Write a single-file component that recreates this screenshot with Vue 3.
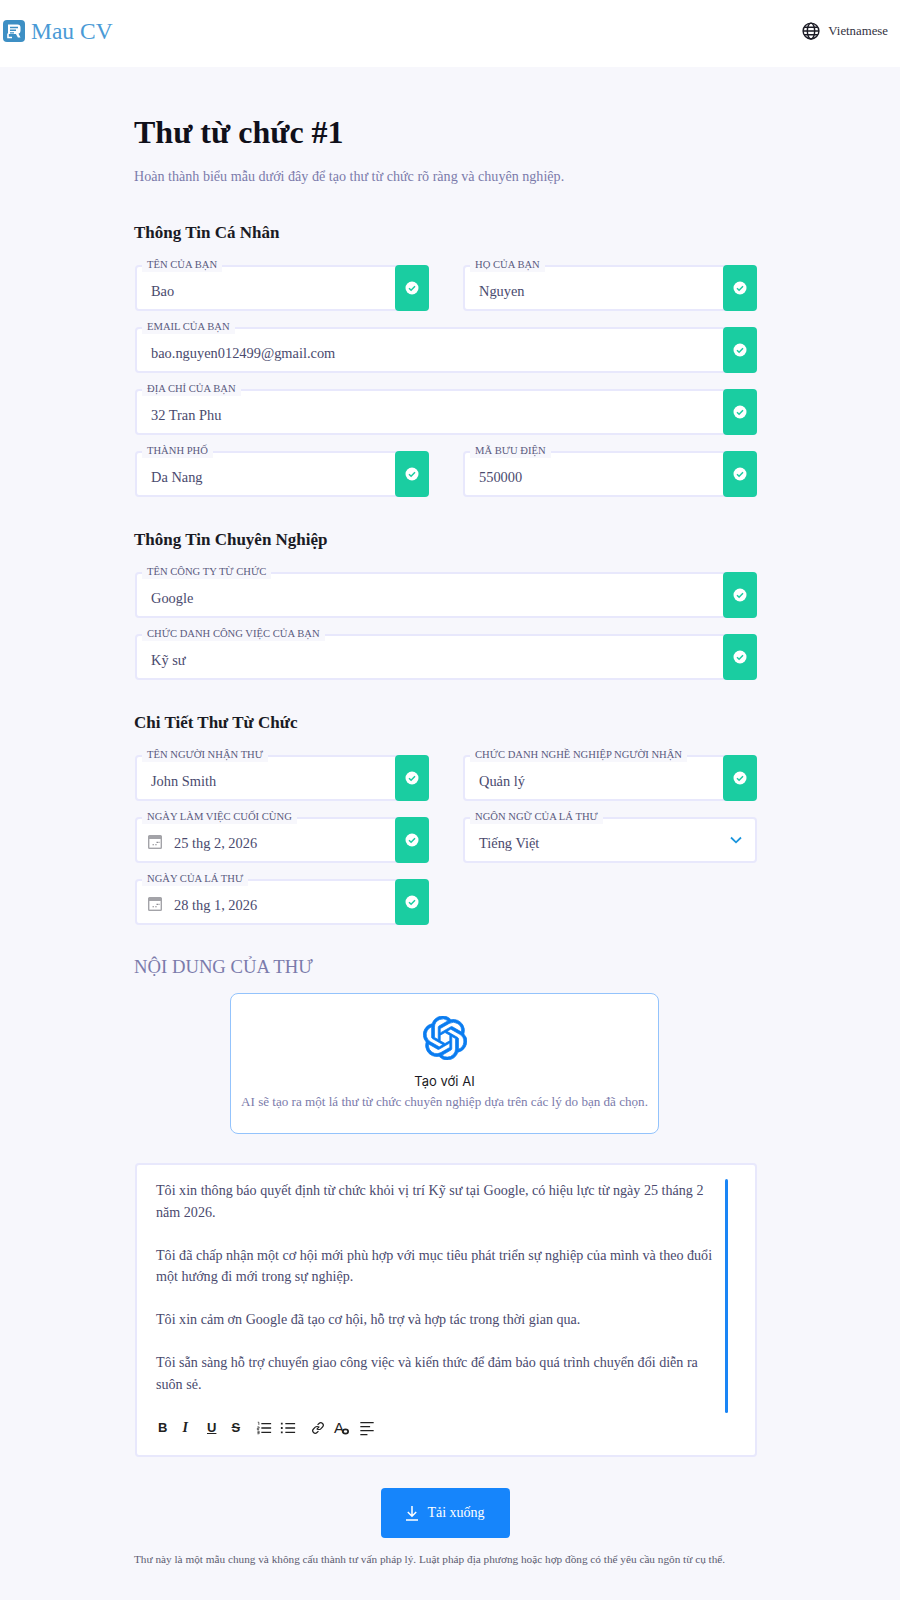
<template>
  <div class="app">
    <header class="topbar">
      <div class="brand">
        <svg class="brand__icon" viewBox="0 0 24 24">
          <rect x="1" y="1" width="22" height="22" rx="4" fill="#3d8fc4" />
          <path d="M6 5.500h9.500a3 3 0 0 1 3 3v3.500a3 3 0 0 1-2 2.800l2 3.700h-2.600l-2-3.500H6z" fill="#fff" />
          <path d="M8 8.500h8M8 11.200h6M8 13.900h4" stroke="#3d8fc4" stroke-width="1.400" />
          <path d="M6 14.500v4h4" stroke="#fff" stroke-width="1.600" fill="none" />
        </svg>
        <span>Mau CV</span>
      </div>
      <div class="lang">
        <svg class="lang__icon" viewBox="0 0 24 24" fill="none" stroke="#1b1b25" stroke-width="1.700">
          <circle cx="12" cy="12" r="9.500" />
          <ellipse cx="12" cy="12" rx="4.400" ry="9.500" />
          <path d="M2.500 12h19M3.600 7.500h16.800M3.600 16.500h16.800" />
        </svg>
        <span>Vietnamese</span>
      </div>
    </header>

    <main class="page">
      <h1 class="title">Thư từ chức #1</h1>
      <p class="intro">Hoàn thành biểu mẫu dưới đây để tạo thư từ chức rõ ràng và chuyên nghiệp.</p>

      <section v-for="section in sections" :key="section.title" class="section">
        <h2 class="section__title">{{ section.title }}</h2>
        <div class="grid">
          <div
            v-for="field in section.fields"
            :key="field.label"
            class="field"
            :class="{ 'field--wide': field.wide, 'field--date': field.date }"
          >
            <span class="field__label">{{ field.label }}</span>
            <svg v-if="field.date" class="field__cal" viewBox="0 0 16 16">
              <path d="M1 2.500A1.500 1.500 0 0 1 2.500 1h11A1.500 1.500 0 0 1 15 2.500v11a1.500 1.500 0 0 1-1.500 1.500h-11A1.500 1.500 0 0 1 1 13.500z" fill="#a3a3a8" />
              <rect x="2.400" y="5" width="11.200" height="8.600" fill="#fff" />
              <path d="M5.500 10.800h1.500M8.200 10.800h1.500M9.500 8.400h1.500M11.500 8.400h1" stroke="#8d8d93" stroke-width="1.100" />
            </svg>
            <span class="field__value">{{ field.value }}</span>
            <span v-if="field.select" class="field__chevron">
              <svg viewBox="0 0 12 8" fill="none" stroke="#1b95dd" stroke-width="1.800">
                <path d="M1 1.500l5 4.800 5-4.800" />
              </svg>
            </span>
            <span v-else class="field__ok">
              <svg viewBox="0 0 14 14">
                <circle cx="7" cy="7" r="6.500" fill="#fff" />
                <path d="M4 7.200l2.100 2 3.900-4" fill="none" stroke="#1acda1" stroke-width="1.500" />
              </svg>
            </span>
          </div>
        </div>
      </section>

      <h2 class="content-title">NỘI DUNG CỦA THƯ</h2>

      <div class="ai-card">
        <svg class="ai-card__icon" viewBox="0 0 24 24" fill="#0a7cf0" stroke="#0a7cf0" stroke-width=".4">
          <path d="M22.2819 9.8211a5.9847 5.9847 0 0 0-.5157-4.9108 6.0462 6.0462 0 0 0-6.5098-2.9A6.0651 6.0651 0 0 0 4.9807 4.1818a5.9847 5.9847 0 0 0-3.9977 2.9 6.0462 6.0462 0 0 0 .7427 7.0966 5.98 5.98 0 0 0 .511 4.9107 6.051 6.051 0 0 0 6.5146 2.9001A5.9847 5.9847 0 0 0 13.2599 24a6.0557 6.0557 0 0 0 5.7718-4.2058 5.9894 5.9894 0 0 0 3.9977-2.9001 6.0557 6.0557 0 0 0-.7475-7.0729zm-9.022 12.6081a4.4755 4.4755 0 0 1-2.8764-1.0408l.1419-.0804 4.7783-2.7582a.7948.7948 0 0 0 .3927-.6813v-6.7369l2.02 1.1686a.071.071 0 0 1 .038.052v5.5826a4.504 4.504 0 0 1-4.4945 4.4944zm-9.6607-4.1254a4.4708 4.4708 0 0 1-.5346-3.0137l.142.0852 4.783 2.7582a.7712.7712 0 0 0 .7806 0l5.8428-3.3685v2.3324a.0804.0804 0 0 1-.0332.0615L9.74 19.9502a4.4992 4.4992 0 0 1-6.1408-1.6464zM2.3408 7.8956a4.485 4.485 0 0 1 2.3655-1.9728V11.6a.7664.7664 0 0 0 .3879.6765l5.8144 3.3543-2.0201 1.1685a.0757.0757 0 0 1-.071 0l-4.8303-2.7865A4.504 4.504 0 0 1 2.3408 7.872zm16.5963 3.8558L13.1038 8.364 15.1192 7.2a.0757.0757 0 0 1 .071 0l4.8303 2.7913a4.4944 4.4944 0 0 1-.6765 8.1042v-5.6772a.79.79 0 0 0-.407-.667zm2.0107-3.0231l-.142-.0852-4.7735-2.7818a.7759.7759 0 0 0-.7854 0L9.409 9.2297V6.8974a.0662.0662 0 0 1 .0284-.0615l4.8303-2.7866a4.4992 4.4992 0 0 1 6.6802 4.66zM8.3065 12.863l-2.02-1.1638a.0804.0804 0 0 1-.038-.0567V6.0742a4.4992 4.4992 0 0 1 7.3757-3.4537l-.142.0805L8.704 5.459a.7948.7948 0 0 0-.3927.6813zm1.0976-2.3654l2.602-1.4998 2.6069 1.4998v2.9994l-2.5974 1.4997-2.6067-1.4997Z" />
        </svg>
        <div class="ai-card__title">Tạo với AI</div>
        <div class="ai-card__text">AI sẽ tạo ra một lá thư từ chức chuyên nghiệp dựa trên các lý do bạn đã chọn.</div>
      </div>

      <div class="editor">
        <div class="editor__body">
          <p v-for="para in letter" :key="para">{{ para }}</p>
        </div>
        <span class="editor__scroll"></span>
        <div class="toolbar">
          <span class="tool tool--b">B</span>
          <span class="tool tool--i">I</span>
          <span class="tool tool--u">U</span>
          <span class="tool tool--s">S</span>
          <svg class="tool-svg tool-svg--first" viewBox="0 0 18 18" fill="none" stroke="#222" stroke-width="1.300">
            <path d="M6 4h11M6 9h11M6 14h11" stroke-width="1.500" />
            <path d="M2 2.500h1.200v3M1.500 7.800h2v1.500h-2v1.500h2M1.500 12.500h2v3h-2M1.500 14h2" stroke-width=".800" />
          </svg>
          <svg class="tool-svg" viewBox="0 0 18 18" fill="none" stroke="#222" stroke-width="1.500">
            <path d="M6 4h11M6 9h11M6 14h11" />
            <path d="M1 4h2M1 9h2M1 14h2" stroke-width="2" />
          </svg>
          <svg class="tool-svg tool-svg--link" viewBox="0 0 18 18" fill="none" stroke="#222" stroke-width="1.300">
            <path d="M7.500 10.500l3-3" />
            <path d="M8.500 5.500l1.600-1.600a2.800 2.800 0 0 1 4 4l-2 2a2.800 2.800 0 0 1-4 0" />
            <path d="M9.500 12.500l-1.600 1.600a2.800 2.800 0 0 1-4-4l2-2a2.800 2.800 0 0 1 4 0" />
          </svg>
          <span class="tool tool--a">
            A
            <svg class="tool__blob" viewBox="0 0 10 8" fill="none" stroke="#222" stroke-width="2">
              <ellipse cx="5" cy="4" rx="3" ry="2.400" />
            </svg>
          </span>
          <svg class="tool-svg tool-svg--align" viewBox="0 0 18 18" fill="none" stroke="#222" stroke-width="1.500">
            <path d="M1.500 3h15M1.500 7.500h11M1.500 12h15M1.500 16.500h8" />
          </svg>
        </div>
      </div>

      <div class="actions">
        <button class="download" type="button">
          <svg viewBox="0 0 14 16" fill="none" stroke="#fff" stroke-width="1.500">
            <path d="M7 1v10M2.800 7l4.200 4.200L11.200 7M1 15h12" />
          </svg>
          Tải xuống
        </button>
      </div>
      <p class="note">Thư này là một mẫu chung và không cấu thành tư vấn pháp lý. Luật pháp địa phương hoặc hợp đồng có thể yêu cầu ngôn từ cụ thể.</p>
    </main>
  </div>
</template>

<script setup>
const sections = [
  {
    title: "Thông Tin Cá Nhân",
    fields: [
      { label: "Tên của bạn", value: "Bao" },
      { label: "Họ của bạn", value: "Nguyen" },
      { label: "Email của bạn", value: "bao.nguyen012499@gmail.com", wide: true },
      { label: "Địa chỉ của bạn", value: "32 Tran Phu", wide: true },
      { label: "Thành phố", value: "Da Nang" },
      { label: "Mã bưu điện", value: "550000" },
    ],
  },
  {
    title: "Thông Tin Chuyên Nghiệp",
    fields: [
      { label: "Tên công ty từ chức", value: "Google", wide: true },
      { label: "Chức danh công việc của bạn", value: "Kỹ sư", wide: true },
    ],
  },
  {
    title: "Chi Tiết Thư Từ Chức",
    fields: [
      { label: "Tên người nhận thư", value: "John Smith" },
      { label: "Chức danh nghề nghiệp người nhận", value: "Quản lý" },
      { label: "Ngày làm việc cuối cùng", value: "25 thg 2, 2026", date: true },
      { label: "Ngôn ngữ của lá thư", value: "Tiếng Việt", select: true },
      { label: "Ngày của lá thư", value: "28 thg 1, 2026", date: true },
    ],
  },
];

const letter = [
  "Tôi xin thông báo quyết định từ chức khỏi vị trí Kỹ sư tại Google, có hiệu lực từ ngày 25 tháng 2 năm 2026.",
  "Tôi đã chấp nhận một cơ hội mới phù hợp với mục tiêu phát triển sự nghiệp của mình và theo đuổi một hướng đi mới trong sự nghiệp.",
  "Tôi xin cảm ơn Google đã tạo cơ hội, hỗ trợ và hợp tác trong thời gian qua.",
  "Tôi sẵn sàng hỗ trợ chuyển giao công việc và kiến thức để đảm bảo quá trình chuyển đổi diễn ra suôn sẻ.",
];
</script>

<style>
body {
  background: #f7f7fc;
}
</style>

<style scoped>
.app {
  min-height: 1600px;
  background: #f7f7fc;
  font-family: "Liberation Serif", "Times New Roman", serif;
  color: #4a4a6e;
}

.topbar {
  height: 67px;
  background: #fff;
  display: flex;
  align-items: center;
  justify-content: space-between;
  padding: 0 12px 5px 2px;
  box-sizing: border-box;
}

.brand {
  display: flex;
  align-items: center;
  gap: 5px;
  font-size: 23.500px;
  color: #4a9ad6;
}

.brand__icon {
  width: 24px;
  height: 24px;
}

.lang {
  display: flex;
  align-items: center;
  gap: 7px;
  font-size: 12.800px;
  color: #33333f;
}

.lang__icon {
  width: 20px;
  height: 20px;
}

.page {
  width: 632px;
  margin: 0 auto;
  padding-top: 45px;
}

.title {
  margin: 0;
  font-size: 32px;
  line-height: 40px;
  color: #10101a;
}

.intro {
  margin: 15px 0 38px;
  font-size: 14.100px;
  line-height: 18px;
  color: #7b7bab;
}

.section {
  margin-top: 33px;
}

.section__title {
  margin: 0 0 22px;
  font-size: 17px;
  line-height: 20px;
  color: #1a1a24;
}

.grid {
  display: grid;
  grid-template-columns: 1fr 1fr;
  column-gap: 34px;
  row-gap: 16px;
  width: 622px;
  margin-left: 1px;
}

.field {
  position: relative;
  height: 46px;
  box-sizing: border-box;
  display: flex;
  align-items: center;
  background: #fff;
  border: 2px solid #e8e8fc;
  border-radius: 4px;
  padding: 6px 0 0 14px;
  font-size: 14.400px;
  color: #4a4a6e;
}

.field--wide {
  grid-column: 1 / -1;
}

.field__label {
  position: absolute;
  top: -9px;
  left: 5px;
  padding: 0 5px;
  background: #f7f7fc;
  font-size: 10.600px;
  line-height: 14px;
  text-transform: uppercase;
  color: #5a5a7e;
  white-space: nowrap;
}

.field__cal {
  width: 16px;
  height: 16px;
  margin: -2px 11px 0 -4px;
  flex: none;
}

.field__ok {
  position: absolute;
  top: -2px;
  right: -2px;
  bottom: -2px;
  width: 34px;
  display: flex;
  align-items: center;
  justify-content: center;
  background: #1acda1;
  border-radius: 4px;
}

.field__ok svg {
  width: 14px;
  height: 14px;
}

.field__chevron {
  position: absolute;
  right: 13px;
  top: 17px;
  line-height: 0;
}

.field__chevron svg {
  width: 12px;
  height: 8px;
}

.content-title {
  margin: 31px 0 0;
  font-size: 18.700px;
  font-weight: 400;
  line-height: 22px;
  color: #7b7bab;
}

.ai-card {
  width: 429px;
  height: 141px;
  box-sizing: border-box;
  margin: 15px 0 0 96px;
  background: #fff;
  border: 1.500px solid #93c3fc;
  border-radius: 8px;
  display: flex;
  flex-direction: column;
  align-items: center;
  padding-top: 22px;
}

.ai-card__icon {
  width: 44px;
  height: 44px;
}

.ai-card__title {
  margin-top: 12px;
  font-family: Inter, "Liberation Sans", sans-serif;
  font-size: 13px;
  line-height: 18px;
  color: #1a1a24;
}

.ai-card__text {
  margin-top: 4px;
  font-size: 13.100px;
  line-height: 16px;
  color: #7b7bab;
  white-space: nowrap;
}

.editor {
  position: relative;
  width: 622px;
  height: 294px;
  box-sizing: border-box;
  margin: 29px 0 0 1px;
  background: #fff;
  border: 2px solid #e8e8fc;
  border-radius: 4px;
  padding: 15px 38px 0 19px;
}

.editor__body {
  height: 231px;
  font-size: 14.100px;
  line-height: 21.800px;
  color: #4a4a6e;
}

.editor__body p {
  margin: 0 0 21px;
}

.editor__scroll {
  position: absolute;
  top: 14px;
  right: 27px;
  width: 3px;
  height: 234px;
  background: #1a85f5;
  border-radius: 2px;
}

.toolbar {
  display: flex;
  align-items: center;
  gap: 0;
  margin-top: 7px;
  height: 20px;
  color: #222;
}

.tool {
  width: 24.500px;
  font-family: "Liberation Sans", Arial, sans-serif;
  font-size: 13px;
  line-height: 20px;
  text-align: left;
  padding-left: 2px;
  box-sizing: border-box;
}

.tool--b {
  font-weight: 700;
}

.tool--i {
  font-family: "Liberation Serif", serif;
  font-size: 14px;
  font-style: italic;
  font-weight: 700;
}

.tool--u {
  font-weight: 700;
  text-decoration: underline;
}

.tool--s {
  font-weight: 700;
  text-decoration: line-through;
}

.tool--a {
  position: relative;
  width: 24px;
  font-size: 15px;
  padding-left: 0;
}

.tool__blob {
  position: absolute;
  left: 7px;
  top: 10px;
  width: 9px;
  height: 7px;
}

.tool-svg {
  width: 16px;
  height: 16px;
  margin-right: 8px;
}

.tool-svg--first {
  margin-left: 2px;
}

.tool-svg--link {
  margin-left: 6px;
}

.tool-svg--align {
  margin-left: 1px;
}

.actions {
  display: flex;
  justify-content: center;
  margin: 31px 0 0 -10px;
}

.download {
  width: 129px;
  height: 50px;
  display: flex;
  align-items: center;
  justify-content: center;
  gap: 8px;
  border: 0;
  border-radius: 4px;
  background: #1685fb;
  color: #fff;
  font-family: inherit;
  font-size: 14px;
}

.download svg {
  width: 14px;
  height: 16px;
}

.note {
  margin: 14px 0 0;
  font-size: 11.250px;
  line-height: 14px;
  color: #5c5c70;
  white-space: nowrap;
}
</style>
